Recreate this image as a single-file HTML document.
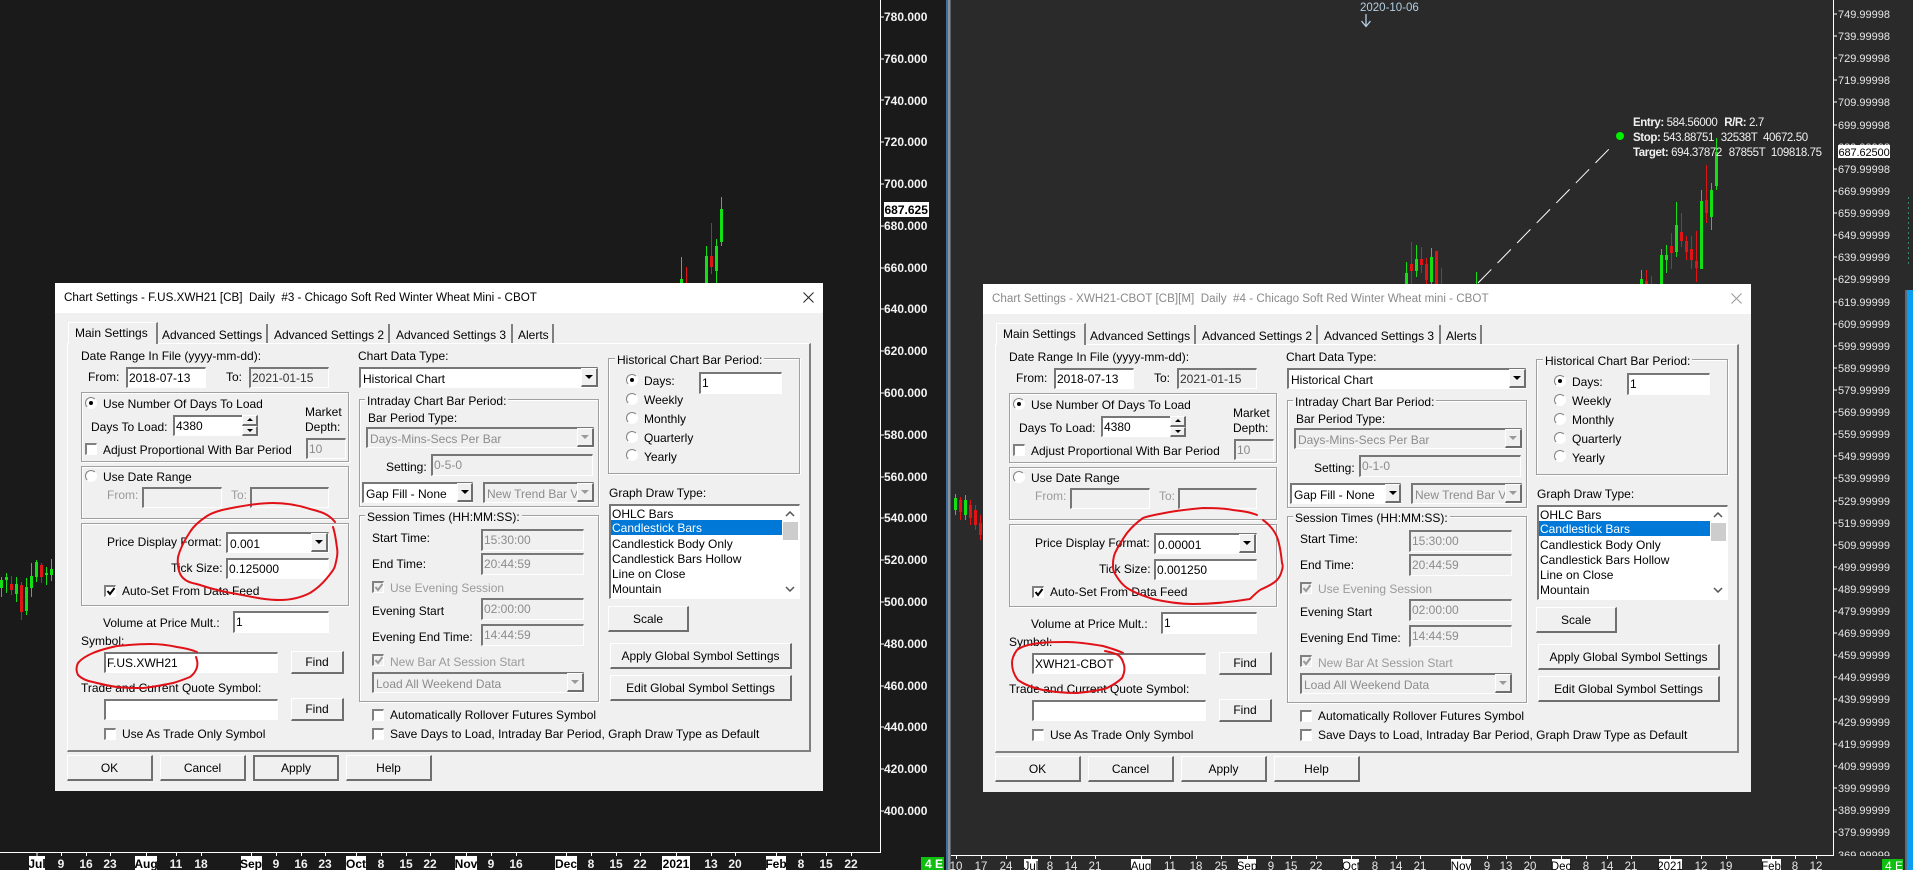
<!DOCTYPE html>
<html><head><meta charset="utf-8"><title>Chart Settings</title>
<style>
html,body{margin:0;padding:0;background:#1a1a1a;width:1913px;height:870px;overflow:hidden}
#chart{position:absolute;left:0;top:0;width:1913px;height:870px}
text{font-family:"Liberation Sans",sans-serif}
.dlg{position:absolute;width:768px;height:508px;background:#f0f0f0;font:12px/14px "Liberation Sans",sans-serif;color:#000;overflow:hidden}
.dlg div{position:absolute;box-sizing:border-box;white-space:nowrap}
.tb{left:0;top:0;width:768px;height:30px;background:#fff}
.panel{left:12px;top:60px;width:744px;height:409px;border-top:1px solid #fff;border-left:1px solid #fff;border-right:2px solid #808080;border-bottom:2px solid #808080}
.tab{top:41px;height:19px;border-right:2px solid #808080}
.tab0{left:13px;top:39px;width:90px;height:22px;background:#f0f0f0;border-top:1px solid #fff;border-left:1px solid #fff;border-right:2px solid #808080}
.g{border:1px solid #a0a0a0;box-shadow:1px 1px 0 #fff,inset 1px 1px 0 #fff}
.l{background:#f0f0f0;padding:0 2px}
.gr{color:#9a9a9a}
.i{background:#fff;border-top:2px solid #777;border-left:2px solid #777;border-right:1px solid #fff;border-bottom:1px solid #fff;padding-left:1px;line-height:18px}
.dlg .s{line-height:20px}
.x{background:#f0f0f0;color:#8c8c8c}
.b{background:#f0f0f0;border-top:1px solid #fff;border-left:1px solid #fff;border-right:2px solid #6e6e6e;border-bottom:2px solid #6e6e6e;text-align:center}
.def{border:2px solid #6e6e6e;outline:0}
.a{background:#f0f0f0;border-top:1px solid #fff;border-left:1px solid #fff;border-right:2px solid #6e6e6e;border-bottom:2px solid #6e6e6e}
.a:after{content:"";position:absolute;left:50%;top:50%;margin:-2px 0 0 -4px;border-left:4px solid transparent;border-right:4px solid transparent;border-top:4px solid #000}
.a.x:after{border-top-color:#999}
.up:after{border-top:0;border-bottom:3px solid #000;margin:-2px 0 0 -3px;border-left-width:3px;border-right-width:3px}
.dn:after{margin:-2px 0 0 -3px;border-top-width:3px;border-left-width:3px;border-right-width:3px}
.r{width:12px;height:12px;border-radius:50%;background:#fff;border:1.5px solid;border-color:#808080 #fff #fff #808080}
.r.on:after{content:"";position:absolute;left:3px;top:3px;width:4px;height:4px;border-radius:50%;background:#000}
.c{width:12px;height:12px;background:#fff;border-top:2px solid #808080;border-left:2px solid #808080;border-right:1px solid #fff;border-bottom:1px solid #fff}
.c svg{position:absolute;left:0;top:-1px;width:10px;height:10px}
.c.x{background:#f0f0f0}
.list{left:554px;top:221px;width:191px;height:95px;background:#fff;border-top:2px solid #777;border-left:2px solid #777;border-right:1px solid #fff;border-bottom:1px solid #fff}
.sel{background:#0078d7;color:#fff}
.thumb{background:#cdcdcd}
.ti{font-size:11.65px}
</style></head><body>
<svg id="chart" width="1913" height="870" viewBox="0 0 1913 870" xmlns="http://www.w3.org/2000/svg">
<rect x="0" y="0" width="946" height="870" fill="#1a1a1a"/>
<rect x="946" y="0" width="2" height="870" fill="#3f6f9f"/>
<rect x="948" y="0" width="2.500" height="870" fill="#8a949c"/>
<rect x="950.500" y="0" width="963" height="870" fill="#2a2a2a"/>
<rect x="1907" y="290" width="6" height="580" fill="#0a9df0"/>
<rect x="1905" y="290" width="2" height="580" fill="#5a6a78"/>
<path d="M1908.500 197V267" stroke="#3a8a6a" stroke-dasharray="2 3" fill="none"/>
<!-- axes -->
<path d="M880.500 0V852.500H0" stroke="#fff" fill="none"/>
<path d="M1833.500 0V855.500H951" stroke="#fff" fill="none"/>
<path stroke="#fff" d="M880 17h4M880 59h4M880 100h4M880 142h4M880 184h4M880 226h4M880 268h4M880 309h4M880 351h4M880 393h4M880 435h4M880 477h4M880 518h4M880 560h4M880 602h4M880 644h4M880 686h4M880 727h4M880 769h4M880 811h4"/>
<path stroke="#fff" d="M1833 14h4M1833 36h4M1833 58h4M1833 80h4M1833 102h4M1833 125h4M1833 169h4M1833 191h4M1833 213h4M1833 235h4M1833 257h4M1833 279h4M1833 302h4M1833 324h4M1833 346h4M1833 368h4M1833 390h4M1833 412h4M1833 434h4M1833 456h4M1833 478h4M1833 501h4M1833 523h4M1833 545h4M1833 567h4M1833 589h4M1833 611h4M1833 633h4M1833 655h4M1833 677h4M1833 699h4M1833 722h4M1833 744h4M1833 766h4M1833 788h4M1833 810h4M1833 832h4"/>
<path stroke="#fff" d="M37 852v4M61.500 852v4M86.500 852v4M110.500 852v4M146.500 852v4M176.500 852v4M201.500 852v4M251.500 852v4M276.500 852v4M301.500 852v4M325.500 852v4M356.500 852v4M381.500 852v4M406.500 852v4M430.500 852v4M466.500 852v4M491.500 852v4M516.500 852v4M566.500 852v4M591.500 852v4M616.500 852v4M640.500 852v4M676.500 852v4M711.500 852v4M735.500 852v4M776.500 852v4M801.500 852v4M826.500 852v4M851.500 852v4"/>
<path stroke="#fff" d="M956.500 855v4M981.500 855v4M1006.500 855v4M1031.500 855v4M1050.500 855v4M1071.500 855v4M1095.500 855v4M1141.500 855v4M1170.500 855v4M1196.500 855v4M1221.500 855v4M1247.500 855v4M1271.500 855v4M1291.500 855v4M1316.500 855v4M1351.500 855v4M1375.500 855v4M1396.500 855v4M1420.500 855v4M1461.500 855v4M1487.500 855v4M1506.500 855v4M1530.500 855v4M1561.500 855v4M1586.500 855v4M1607.500 855v4M1631.500 855v4M1670.500 855v4M1701.500 855v4M1726.500 855v4M1771.500 855v4M1795.500 855v4M1816.500 855v4"/>
<!-- left candles -->
<path fill="none" stroke="#12e012" d="M1.500 577V597M6.500 573V593M16.500 577V602M26.500 578V615M31.500 563V597M36.500 560V582M46.500 567V585M51.500 559V581M681.500 257V283M706.500 246V283M716.500 239V283M721.500 197V246"/>
<path fill="none" stroke="#12e012" stroke-width="3" d="M1.500 580V588M6.500 577V580M16.500 584V594M26.500 587V611M31.500 576V588M36.500 562V577M46.500 573V575M51.500 569V575M681.500 279V283M706.500 256V283M716.500 246V271M721.500 209V242"/>
<path fill="none" stroke="#e01414" d="M11.500 576V595M21.500 582V620M41.500 563V583M686.500 267V283M711.500 223V274"/>
<path fill="none" stroke="#e01414" stroke-width="3" d="M11.500 584V590M21.500 585V612M41.500 565V577M711.500 256V267"/>
<!-- right candles -->
<path fill="none" stroke="#12e012" d="M955.500 494V515M965.500 495V520M1406.500 262V284M1416.500 245V277M1431.500 248V284M1476.500 272V284M1641.500 270V284M1661.500 249V284M1666.500 245V273M1676.500 202V257M1701.500 190V269M1711.500 183V230M1716.500 138V190"/>
<path fill="none" stroke="#12e012" stroke-width="3" d="M955.500 498V510M965.500 500V515M1406.500 273V284M1416.500 259V271M1431.500 257V282M1641.500 279V284M1661.500 255V284M1666.500 255V260M1676.500 225V252M1701.500 201V269M1711.500 190V217M1716.500 152V186"/>
<path fill="none" stroke="#e01414" d="M960.500 497V520M970.500 500V525M975.500 505V530M980.500 515V540M1411.500 242V284M1421.500 247V273M1426.500 258V284M1436.500 251V284M1441.500 268V284M1646.500 270V284M1651.500 276V284M1671.500 233V269M1681.500 213V247M1686.500 236V260M1691.500 236V269M1696.500 231V282M1706.500 165V223"/>
<path fill="none" stroke="#e01414" stroke-width="3" d="M960.500 500V512M970.500 505V518M975.500 510V525M980.500 523V535M1411.500 264V271M1421.500 259V265M1426.500 264V280M1436.500 251V284M1646.500 281V284M1671.500 246V253M1681.500 232V241M1686.500 241V252M1691.500 249V260M1696.500 261V268M1706.500 200V213"/>
<!-- trend line -->
<path d="M1478 283L1612 146" stroke="#fff" stroke-dasharray="19 9" fill="none"/>
<circle cx="1620" cy="136" r="4" fill="#00f000"/>
<g font-size="11.500" fill="#f0f0f0" letter-spacing="-0.4">
<text x="1633" y="126"><tspan font-weight="bold">Entry:</tspan> 584.56000  <tspan font-weight="bold" dx="4">R/R:</tspan> 2.7</text>
<text x="1633" y="141"><tspan font-weight="bold">Stop:</tspan> 543.88751 <tspan dx="4">32538T</tspan> <tspan dx="3">40672.50</tspan></text>
<text x="1633" y="156"><tspan font-weight="bold">Target:</tspan> 694.37872 <tspan dx="4">87855T</tspan> <tspan dx="3">109818.75</tspan></text>
</g>
<text x="1360" y="11" font-size="11.500" fill="#b4cfe2">2020-10-06</text>
<path d="M1366 14V26M1361.500 21L1366 26.500L1370.500 21" stroke="#b4cfe2" stroke-width="1.300" fill="none"/>
<!-- left price axis -->
<g font-size="12" font-weight="bold" fill="#f4f4f4">
<text x="884" y="21">780.000</text><text x="884" y="63">760.000</text><text x="884" y="105">740.000</text><text x="884" y="146">720.000</text><text x="884" y="188">700.000</text><text x="884" y="230">680.000</text><text x="884" y="272">660.000</text><text x="884" y="313">640.000</text><text x="884" y="355">620.000</text><text x="884" y="397">600.000</text><text x="884" y="439">580.000</text><text x="884" y="481">560.000</text><text x="884" y="522">540.000</text><text x="884" y="564">520.000</text><text x="884" y="606">500.000</text><text x="884" y="648">480.000</text><text x="884" y="690">460.000</text><text x="884" y="731">440.000</text><text x="884" y="773">420.000</text><text x="884" y="815">400.000</text>
</g>
<rect x="884" y="202" width="45" height="15" fill="#fff"/>
<text x="884.500" y="214" font-size="12" font-weight="bold" fill="#000">687.625</text>
<!-- right price axis -->
<g font-size="11" fill="#e6e6e6">
<text x="1838" y="18">749.99998</text><text x="1838" y="40">739.99998</text><text x="1838" y="62">729.99998</text><text x="1838" y="84">719.99998</text><text x="1838" y="106">709.99998</text><text x="1838" y="129">699.99998</text><text x="1838" y="151">689.99998</text><text x="1838" y="173">679.99998</text><text x="1838" y="195">669.99999</text><text x="1838" y="217">659.99999</text><text x="1838" y="239">649.99999</text><text x="1838" y="261">639.99999</text><text x="1838" y="283">629.99999</text><text x="1838" y="306">619.99999</text><text x="1838" y="328">609.99999</text><text x="1838" y="350">599.99999</text><text x="1838" y="372">589.99999</text><text x="1838" y="394">579.99999</text><text x="1838" y="416">569.99999</text><text x="1838" y="438">559.99999</text><text x="1838" y="460">549.99999</text><text x="1838" y="482">539.99999</text><text x="1838" y="505">529.99999</text><text x="1838" y="527">519.99999</text><text x="1838" y="549">509.99999</text><text x="1838" y="571">499.99999</text><text x="1838" y="593">489.99999</text><text x="1838" y="615">479.99999</text><text x="1838" y="637">469.99999</text><text x="1838" y="659">459.99999</text><text x="1838" y="681">449.99999</text><text x="1838" y="703">439.99999</text><text x="1838" y="726">429.99999</text><text x="1838" y="748">419.99999</text><text x="1838" y="770">409.99999</text><text x="1838" y="792">399.99999</text><text x="1838" y="814">389.99999</text><text x="1838" y="836">379.99999</text><text x="1838" y="859">369.99999</text>
</g>
<rect x="1834" y="856" width="71" height="14" fill="#2a2a2a"/>
<rect x="1838" y="145" width="52" height="13" fill="#fff"/>
<text x="1838.500" y="156" font-size="11" letter-spacing="-0.1" fill="#000">687.62500</text>
<!-- left time axis -->
<rect x="29" y="856" width="16" height="14" fill="#fff"/><rect x="135" y="856" width="22" height="14" fill="#fff"/><rect x="241" y="856" width="21" height="14" fill="#fff"/><rect x="346" y="856" width="20" height="14" fill="#fff"/><rect x="455" y="856" width="22" height="14" fill="#fff"/><rect x="555" y="856" width="22" height="14" fill="#fff"/><rect x="662" y="856" width="28" height="14" fill="#fff"/><rect x="766" y="856" width="20" height="14" fill="#fff"/>
<g font-size="12" font-weight="bold" fill="#f0f0f0" text-anchor="middle">
<text x="61" y="868">9</text><text x="86" y="868">16</text><text x="110" y="868">23</text><text x="176" y="868">11</text><text x="201" y="868">18</text><text x="276" y="868">9</text><text x="301" y="868">16</text><text x="325" y="868">23</text><text x="381" y="868">8</text><text x="406" y="868">15</text><text x="430" y="868">22</text><text x="491" y="868">9</text><text x="516" y="868">16</text><text x="591" y="868">8</text><text x="616" y="868">15</text><text x="640" y="868">22</text><text x="711" y="868">13</text><text x="735" y="868">20</text><text x="801" y="868">8</text><text x="826" y="868">15</text><text x="851" y="868">22</text>
</g>
<g font-size="12" font-weight="bold" fill="#000" text-anchor="middle">
<text x="37" y="868">Jul</text><text x="146" y="868">Aug</text><text x="251" y="868">Sep</text><text x="356" y="868">Oct</text><text x="466" y="868">Nov</text><text x="566" y="868">Dec</text><text x="676" y="868">2021</text><text x="776" y="868">Feb</text>
</g>
<!-- right time axis -->
<rect x="1024" y="859" width="14" height="11" fill="#fff"/><rect x="1131" y="859" width="20" height="11" fill="#fff"/><rect x="1238" y="859" width="18" height="11" fill="#fff"/><rect x="1343" y="859" width="16" height="11" fill="#fff"/><rect x="1451" y="859" width="20" height="11" fill="#fff"/><rect x="1552" y="859" width="18" height="11" fill="#fff"/><rect x="1659" y="859" width="23" height="11" fill="#fff"/><rect x="1762" y="859" width="19" height="11" fill="#fff"/>
<g font-size="11.500" fill="#e6e6e6" text-anchor="middle">
<text x="956" y="870">10</text><text x="981" y="870">17</text><text x="1006" y="870">24</text><text x="1050" y="870">8</text><text x="1071" y="870">14</text><text x="1095" y="870">21</text><text x="1170" y="870">11</text><text x="1196" y="870">18</text><text x="1221" y="870">25</text><text x="1271" y="870">9</text><text x="1291" y="870">15</text><text x="1316" y="870">22</text><text x="1375" y="870">8</text><text x="1396" y="870">14</text><text x="1420" y="870">21</text><text x="1487" y="870">9</text><text x="1506" y="870">13</text><text x="1530" y="870">20</text><text x="1586" y="870">8</text><text x="1607" y="870">14</text><text x="1631" y="870">21</text><text x="1701" y="870">12</text><text x="1726" y="870">19</text><text x="1795" y="870">8</text><text x="1816" y="870">12</text>
</g>
<g font-size="11.500" fill="#000" text-anchor="middle">
<text x="1031" y="870">Jul</text><text x="1141" y="870">Aug</text><text x="1247" y="870">Sep</text><text x="1351" y="870">Oct</text><text x="1461" y="870">Nov</text><text x="1561" y="870">Dec</text><text x="1670" y="870">2021</text><text x="1771" y="870">Feb</text>
</g>
<rect x="921" y="857" width="23" height="13" fill="#10c010"/>
<text x="925" y="868" font-size="12" font-weight="bold" fill="#fff">4 E</text>
<rect x="1882" y="859" width="21" height="11" fill="#10c010"/>
<text x="1885" y="870" font-size="12" fill="#fff">4 E</text>
</svg>

<div class="dlg" style="left:55px;top:283px">
<div class="tb"></div>
<div class="ti" style="left:9px;top:8px">Chart Settings - F.US.XWH21 [CB]&nbsp; Daily&nbsp; #3 - Chicago Soft Red Winter Wheat Mini - CBOT</div>
<div style="left:748px;top:9px;width:11px;height:11px"><svg width="11" height="11" style="display:block"><path d="M.5.500L10.500 10.500M10.500.500L.5 10.500" stroke="#222" fill="none"/></svg></div>
<div class="panel"></div>
<div class="tab0"></div>
<div style="left:20px;top:43px">Main Settings</div>
<div class="tab" style="left:103px;width:110px"></div><div style="left:107px;top:45px">Advanced Settings</div>
<div class="tab" style="left:213px;width:122px"></div><div style="left:219px;top:45px">Advanced Settings 2</div>
<div class="tab" style="left:335px;width:123px"></div><div style="left:341px;top:45px">Advanced Settings 3</div>
<div class="tab" style="left:458px;width:41px"></div><div style="left:463px;top:45px">Alerts</div>

<div style="left:26px;top:66px">Date Range In File (yyyy-mm-dd):</div>
<div style="left:33px;top:87px">From:</div>
<div class="i" style="left:71px;top:84px;width:80px;height:21px">2018-07-13</div>
<div style="left:171px;top:87px">To:</div>
<div class="i x" style="left:194px;top:84px;width:80px;height:21px;color:#333">2021-01-15</div>

<div class="g" style="left:26px;top:109px;width:268px;height:70px"></div>
<div class="r on" style="left:30px;top:114px"></div>
<div style="left:48px;top:114px">Use Number Of Days To Load</div>
<div style="left:36px;top:137px">Days To Load:</div>
<div class="i" style="left:118px;top:132px;width:70px;height:21px">4380</div>
<div class="a up" style="left:187px;top:132px;width:16px;height:11px"></div>
<div class="a dn" style="left:187px;top:143px;width:16px;height:10px"></div>
<div style="left:250px;top:122px">Market</div>
<div style="left:250px;top:137px">Depth:</div>
<div class="i x" style="left:251px;top:155px;width:40px;height:21px">10</div>
<div class="c" style="left:30px;top:160px"></div>
<div style="left:48px;top:160px">Adjust Proportional With Bar Period</div>

<div class="g" style="left:26px;top:183px;width:268px;height:53px"></div>
<div class="r" style="left:30px;top:187px"></div>
<div style="left:48px;top:187px">Use Date Range</div>
<div class="gr" style="left:52px;top:205px">From:</div>
<div class="i x" style="left:87px;top:204px;width:80px;height:21px"></div>
<div class="gr" style="left:176px;top:205px">To:</div>
<div class="i x" style="left:195px;top:204px;width:79px;height:21px"></div>

<div class="g" style="left:26px;top:240px;width:268px;height:83px"></div>
<div style="left:52px;top:252px">Price Display Format:</div>
<div class="i s" style="left:171px;top:249px;width:103px;height:21px;padding-left:2px">0.001</div>
<div class="a" style="left:256px;top:250px;width:17px;height:19px"></div>
<div style="left:116px;top:278px">Tick Size:</div>
<div class="i" style="left:171px;top:275px;width:103px;height:21px">0.125000</div>
<div class="c" style="left:49px;top:302px"><svg viewBox="0 0 10 10"><path d="M1.500 5L4 8L8.500 2" stroke="#000" stroke-width="2" fill="none"/></svg></div>
<div style="left:67px;top:301px">Auto-Set From Data Feed</div>

<div style="left:48px;top:333px">Volume at Price Mult.:</div>
<div class="i" style="left:178px;top:328px;width:96px;height:22px">1</div>
<div style="left:26px;top:351px">Symbol:</div>
<div class="i" style="left:49px;top:369px;width:174px;height:21px">F.US.XWH21</div>
<div class="b" style="left:236px;top:368px;width:53px;height:23px;line-height:21px">Find</div>
<div style="left:26px;top:398px">Trade and Current Quote Symbol:</div>
<div class="i" style="left:49px;top:416px;width:174px;height:21px"></div>
<div class="b" style="left:236px;top:415px;width:53px;height:23px;line-height:21px">Find</div>
<div class="c" style="left:49px;top:445px"></div>
<div style="left:67px;top:444px">Use As Trade Only Symbol</div>

<div style="left:303px;top:66px">Chart Data Type:</div>
<div class="i s" style="left:304px;top:84px;width:239px;height:21px;padding-left:2px">Historical Chart</div>
<div class="a" style="left:526px;top:85px;width:17px;height:19px"></div>
<div class="g" style="left:304px;top:116px;width:240px;height:108px"></div>
<div class="l" style="left:310px;top:111px">Intraday Chart Bar Period:</div>
<div style="left:313px;top:128px">Bar Period Type:</div>
<div class="i x s" style="left:311px;top:144px;width:228px;height:21px;padding-left:2px">Days-Mins-Secs Per Bar</div>
<div class="a x" style="left:522px;top:145px;width:17px;height:19px"></div>
<div style="left:331px;top:177px">Setting:</div>
<div class="i x" style="left:376px;top:171px;width:162px;height:22px">0-5-0</div>
<div class="i s" style="left:307px;top:199px;width:111px;height:21px;padding-left:2px">Gap Fill - None</div>
<div class="a" style="left:402px;top:200px;width:16px;height:19px"></div>
<div class="i x s" style="left:428px;top:199px;width:111px;height:21px;padding-left:2px;overflow:hidden">New Trend Bar V</div>
<div class="a x" style="left:522px;top:200px;width:17px;height:19px"></div>

<div class="g" style="left:304px;top:232px;width:240px;height:187px"></div>
<div class="l" style="left:310px;top:227px">Session Times (HH:MM:SS):</div>
<div style="left:317px;top:248px">Start Time:</div>
<div class="i x" style="left:426px;top:246px;width:103px;height:22px">15:30:00</div>
<div style="left:317px;top:274px">End Time:</div>
<div class="i x" style="left:426px;top:270px;width:103px;height:22px">20:44:59</div>
<div class="c x" style="left:317px;top:298px"><svg viewBox="0 0 10 10"><path d="M1.500 5L4 8L8.500 2" stroke="#999" stroke-width="2" fill="none"/></svg></div>
<div class="gr" style="left:335px;top:298px">Use Evening Session</div>
<div style="left:317px;top:321px">Evening Start</div>
<div class="i x" style="left:426px;top:315px;width:103px;height:22px">02:00:00</div>
<div style="left:317px;top:347px">Evening End Time:</div>
<div class="i x" style="left:426px;top:341px;width:103px;height:22px">14:44:59</div>
<div class="c x" style="left:317px;top:371px"><svg viewBox="0 0 10 10"><path d="M1.500 5L4 8L8.500 2" stroke="#999" stroke-width="2" fill="none"/></svg></div>
<div class="gr" style="left:335px;top:372px">New Bar At Session Start</div>
<div class="i x s" style="left:317px;top:389px;width:212px;height:21px;padding-left:2px">Load All Weekend Data</div>
<div class="a x" style="left:512px;top:390px;width:17px;height:19px"></div>
<div class="c" style="left:317px;top:426px"></div>
<div style="left:335px;top:425px">Automatically Rollover Futures Symbol</div>
<div class="c" style="left:317px;top:445px"></div>
<div style="left:335px;top:444px">Save Days to Load, Intraday Bar Period, Graph Draw Type as Default</div>

<div class="g" style="left:553px;top:75px;width:192px;height:116px"></div>
<div class="l" style="left:560px;top:70px">Historical Chart Bar Period:</div>
<div class="r on" style="left:571px;top:91px"></div><div style="left:589px;top:91px">Days:</div>
<div class="i" style="left:644px;top:89px;width:83px;height:22px">1</div>
<div class="r" style="left:571px;top:110px"></div><div style="left:589px;top:110px">Weekly</div>
<div class="r" style="left:571px;top:129px"></div><div style="left:589px;top:129px">Monthly</div>
<div class="r" style="left:571px;top:148px"></div><div style="left:589px;top:148px">Quarterly</div>
<div class="r" style="left:571px;top:166px"></div><div style="left:589px;top:167px">Yearly</div>

<div style="left:554px;top:203px">Graph Draw Type:</div>
<div class="list"></div>
<div class="sel" style="left:556px;top:237px;width:171px;height:15px"></div>
<div style="left:557px;top:224px">OHLC Bars</div>
<div style="left:557px;top:238px;color:#fff">Candlestick Bars</div>
<div style="left:557px;top:254px">Candlestick Body Only</div>
<div style="left:557px;top:269px">Candlestick Bars Hollow</div>
<div style="left:557px;top:284px">Line on Close</div>
<div style="left:557px;top:299px">Mountain</div>
<div class="thumb" style="left:728px;top:239px;width:15px;height:18px"></div>
<div style="left:730px;top:228px"><svg width="10" height="6" style="display:block"><path d="M1 5L5 1L9 5" stroke="#555" stroke-width="1.500" fill="none"/></svg></div>
<div style="left:730px;top:303px"><svg width="10" height="6" style="display:block"><path d="M1 1L5 5L9 1" stroke="#555" stroke-width="1.500" fill="none"/></svg></div>
<div class="b" style="left:553px;top:323px;width:81px;height:26px;line-height:24px">Scale</div>
<div class="b" style="left:555px;top:360px;width:182px;height:26px;line-height:24px">Apply Global Symbol Settings</div>
<div class="b" style="left:555px;top:392px;width:182px;height:26px;line-height:24px">Edit Global Symbol Settings</div>

<div class="b" style="left:12px;top:472px;width:86px;height:26px;line-height:24px">OK</div>
<div class="b" style="left:105px;top:472px;width:86px;height:26px;line-height:24px">Cancel</div>
<div class="b def" style="left:198px;top:472px;width:86px;height:26px;line-height:22px">Apply</div>
<div class="b" style="left:291px;top:472px;width:86px;height:26px;line-height:24px">Help</div>
</div>

<div class="dlg" style="left:983px;top:284px">
<div class="tb"></div>
<div class="ti" style="left:9px;top:8px;color:#8a8a8a">Chart Settings - XWH21-CBOT [CB][M]&nbsp; Daily&nbsp; #4 - Chicago Soft Red Winter Wheat mini - CBOT</div>
<div style="left:748px;top:9px;width:11px;height:11px"><svg width="11" height="11" style="display:block"><path d="M.5.500L10.500 10.500M10.500.500L.5 10.500" stroke="#999" fill="none"/></svg></div>
<div class="panel"></div>
<div class="tab0"></div>
<div style="left:20px;top:43px">Main Settings</div>
<div class="tab" style="left:103px;width:110px"></div><div style="left:107px;top:45px">Advanced Settings</div>
<div class="tab" style="left:213px;width:122px"></div><div style="left:219px;top:45px">Advanced Settings 2</div>
<div class="tab" style="left:335px;width:123px"></div><div style="left:341px;top:45px">Advanced Settings 3</div>
<div class="tab" style="left:458px;width:41px"></div><div style="left:463px;top:45px">Alerts</div>

<div style="left:26px;top:66px">Date Range In File (yyyy-mm-dd):</div>
<div style="left:33px;top:87px">From:</div>
<div class="i" style="left:71px;top:84px;width:80px;height:21px">2018-07-13</div>
<div style="left:171px;top:87px">To:</div>
<div class="i x" style="left:194px;top:84px;width:80px;height:21px;color:#333">2021-01-15</div>

<div class="g" style="left:26px;top:109px;width:268px;height:70px"></div>
<div class="r on" style="left:30px;top:114px"></div>
<div style="left:48px;top:114px">Use Number Of Days To Load</div>
<div style="left:36px;top:137px">Days To Load:</div>
<div class="i" style="left:118px;top:132px;width:70px;height:21px">4380</div>
<div class="a up" style="left:187px;top:132px;width:16px;height:11px"></div>
<div class="a dn" style="left:187px;top:143px;width:16px;height:10px"></div>
<div style="left:250px;top:122px">Market</div>
<div style="left:250px;top:137px">Depth:</div>
<div class="i x" style="left:251px;top:155px;width:40px;height:21px">10</div>
<div class="c" style="left:30px;top:160px"></div>
<div style="left:48px;top:160px">Adjust Proportional With Bar Period</div>

<div class="g" style="left:26px;top:183px;width:268px;height:53px"></div>
<div class="r" style="left:30px;top:187px"></div>
<div style="left:48px;top:187px">Use Date Range</div>
<div class="gr" style="left:52px;top:205px">From:</div>
<div class="i x" style="left:87px;top:204px;width:80px;height:21px"></div>
<div class="gr" style="left:176px;top:205px">To:</div>
<div class="i x" style="left:195px;top:204px;width:79px;height:21px"></div>

<div class="g" style="left:26px;top:240px;width:268px;height:83px"></div>
<div style="left:52px;top:252px">Price Display Format:</div>
<div class="i s" style="left:171px;top:249px;width:103px;height:21px;padding-left:2px">0.00001</div>
<div class="a" style="left:256px;top:250px;width:17px;height:19px"></div>
<div style="left:116px;top:278px">Tick Size:</div>
<div class="i" style="left:171px;top:275px;width:103px;height:21px">0.001250</div>
<div class="c" style="left:49px;top:302px"><svg viewBox="0 0 10 10"><path d="M1.500 5L4 8L8.500 2" stroke="#000" stroke-width="2" fill="none"/></svg></div>
<div style="left:67px;top:301px">Auto-Set From Data Feed</div>

<div style="left:48px;top:333px">Volume at Price Mult.:</div>
<div class="i" style="left:178px;top:328px;width:96px;height:22px">1</div>
<div style="left:26px;top:351px">Symbol:</div>
<div class="i" style="left:49px;top:369px;width:174px;height:21px">XWH21-CBOT</div>
<div class="b" style="left:236px;top:368px;width:53px;height:23px;line-height:21px">Find</div>
<div style="left:26px;top:398px">Trade and Current Quote Symbol:</div>
<div class="i" style="left:49px;top:416px;width:174px;height:21px"></div>
<div class="b" style="left:236px;top:415px;width:53px;height:23px;line-height:21px">Find</div>
<div class="c" style="left:49px;top:445px"></div>
<div style="left:67px;top:444px">Use As Trade Only Symbol</div>

<div style="left:303px;top:66px">Chart Data Type:</div>
<div class="i s" style="left:304px;top:84px;width:239px;height:21px;padding-left:2px">Historical Chart</div>
<div class="a" style="left:526px;top:85px;width:17px;height:19px"></div>
<div class="g" style="left:304px;top:116px;width:240px;height:108px"></div>
<div class="l" style="left:310px;top:111px">Intraday Chart Bar Period:</div>
<div style="left:313px;top:128px">Bar Period Type:</div>
<div class="i x s" style="left:311px;top:144px;width:228px;height:21px;padding-left:2px">Days-Mins-Secs Per Bar</div>
<div class="a x" style="left:522px;top:145px;width:17px;height:19px"></div>
<div style="left:331px;top:177px">Setting:</div>
<div class="i x" style="left:376px;top:171px;width:162px;height:22px">0-1-0</div>
<div class="i s" style="left:307px;top:199px;width:111px;height:21px;padding-left:2px">Gap Fill - None</div>
<div class="a" style="left:402px;top:200px;width:16px;height:19px"></div>
<div class="i x s" style="left:428px;top:199px;width:111px;height:21px;padding-left:2px;overflow:hidden">New Trend Bar V</div>
<div class="a x" style="left:522px;top:200px;width:17px;height:19px"></div>

<div class="g" style="left:304px;top:232px;width:240px;height:187px"></div>
<div class="l" style="left:310px;top:227px">Session Times (HH:MM:SS):</div>
<div style="left:317px;top:248px">Start Time:</div>
<div class="i x" style="left:426px;top:246px;width:103px;height:22px">15:30:00</div>
<div style="left:317px;top:274px">End Time:</div>
<div class="i x" style="left:426px;top:270px;width:103px;height:22px">20:44:59</div>
<div class="c x" style="left:317px;top:298px"><svg viewBox="0 0 10 10"><path d="M1.500 5L4 8L8.500 2" stroke="#999" stroke-width="2" fill="none"/></svg></div>
<div class="gr" style="left:335px;top:298px">Use Evening Session</div>
<div style="left:317px;top:321px">Evening Start</div>
<div class="i x" style="left:426px;top:315px;width:103px;height:22px">02:00:00</div>
<div style="left:317px;top:347px">Evening End Time:</div>
<div class="i x" style="left:426px;top:341px;width:103px;height:22px">14:44:59</div>
<div class="c x" style="left:317px;top:371px"><svg viewBox="0 0 10 10"><path d="M1.500 5L4 8L8.500 2" stroke="#999" stroke-width="2" fill="none"/></svg></div>
<div class="gr" style="left:335px;top:372px">New Bar At Session Start</div>
<div class="i x s" style="left:317px;top:389px;width:212px;height:21px;padding-left:2px">Load All Weekend Data</div>
<div class="a x" style="left:512px;top:390px;width:17px;height:19px"></div>
<div class="c" style="left:317px;top:426px"></div>
<div style="left:335px;top:425px">Automatically Rollover Futures Symbol</div>
<div class="c" style="left:317px;top:445px"></div>
<div style="left:335px;top:444px">Save Days to Load, Intraday Bar Period, Graph Draw Type as Default</div>

<div class="g" style="left:553px;top:75px;width:192px;height:116px"></div>
<div class="l" style="left:560px;top:70px">Historical Chart Bar Period:</div>
<div class="r on" style="left:571px;top:91px"></div><div style="left:589px;top:91px">Days:</div>
<div class="i" style="left:644px;top:89px;width:83px;height:22px">1</div>
<div class="r" style="left:571px;top:110px"></div><div style="left:589px;top:110px">Weekly</div>
<div class="r" style="left:571px;top:129px"></div><div style="left:589px;top:129px">Monthly</div>
<div class="r" style="left:571px;top:148px"></div><div style="left:589px;top:148px">Quarterly</div>
<div class="r" style="left:571px;top:166px"></div><div style="left:589px;top:167px">Yearly</div>

<div style="left:554px;top:203px">Graph Draw Type:</div>
<div class="list"></div>
<div class="sel" style="left:556px;top:237px;width:171px;height:15px"></div>
<div style="left:557px;top:224px">OHLC Bars</div>
<div style="left:557px;top:238px;color:#fff">Candlestick Bars</div>
<div style="left:557px;top:254px">Candlestick Body Only</div>
<div style="left:557px;top:269px">Candlestick Bars Hollow</div>
<div style="left:557px;top:284px">Line on Close</div>
<div style="left:557px;top:299px">Mountain</div>
<div class="thumb" style="left:728px;top:239px;width:15px;height:18px"></div>
<div style="left:730px;top:228px"><svg width="10" height="6" style="display:block"><path d="M1 5L5 1L9 5" stroke="#555" stroke-width="1.500" fill="none"/></svg></div>
<div style="left:730px;top:303px"><svg width="10" height="6" style="display:block"><path d="M1 1L5 5L9 1" stroke="#555" stroke-width="1.500" fill="none"/></svg></div>
<div class="b" style="left:553px;top:323px;width:81px;height:26px;line-height:24px">Scale</div>
<div class="b" style="left:555px;top:360px;width:182px;height:26px;line-height:24px">Apply Global Symbol Settings</div>
<div class="b" style="left:555px;top:392px;width:182px;height:26px;line-height:24px">Edit Global Symbol Settings</div>

<div class="b" style="left:12px;top:472px;width:86px;height:26px;line-height:24px">OK</div>
<div class="b" style="left:105px;top:472px;width:86px;height:26px;line-height:24px">Cancel</div>
<div class="b" style="left:198px;top:472px;width:86px;height:26px;line-height:24px">Apply</div>
<div class="b" style="left:291px;top:472px;width:86px;height:26px;line-height:24px">Help</div>
</div>

<svg width="1913" height="870" viewBox="0 0 1913 870" style="position:absolute;left:0;top:0" xmlns="http://www.w3.org/2000/svg">
<g fill="none" stroke="#e01218" stroke-width="2" stroke-linejoin="round" stroke-linecap="round">
<path d="M335 522C328 513 318 511 310 509C298 505 285 503 273 503C260 503 248 505 237 507C226 509 215 511 207 516C198 522 193 527 190 532C184 541 180 549 178 557C177 566 179 574 183 578C188 583 194 583 200 585C212 589 224 592 237 594C252 597 266 600 280 600C291 600 302 597 310 593C318 588 323 583 327 578C331 573 334 570 335 566C337 558 338 553 337 548C336 540 335 533 333 527"/>
<path d="M197 652C190 649 184 648 177 647C168 645 159 644 150 644C139 644 128 645 117 646C108 648 100 650 93 653C86 656 81 659 78 663C76 667 76 671 78 675C82 679 87 681 93 682C101 684 109 686 117 687C126 688 134 688 143 688C153 687 163 685 173 683C180 681 185 679 190 677C194 674 196 671 197 667C198 663 197 660 196 657"/>
<path d="M1257 515C1250 512 1242 511 1233 510C1223 508 1213 508 1203 508C1192 509 1181 510 1170 512C1160 514 1151 515 1143 518C1136 523 1131 528 1127 533C1122 540 1118 547 1115 553C1113 558 1113 562 1113 567C1113 571 1115 574 1117 577C1120 582 1123 585 1127 588C1135 593 1144 596 1153 599C1166 602 1179 604 1193 604C1213 604 1232 602 1250 599C1254 595 1256 593 1260 590C1266 587 1272 585 1277 580C1280 577 1281 574 1282 570C1283 567 1283 565 1282 563C1281 553 1280 545 1277 537C1274 530 1270 525 1263 520"/>
<path d="M1123 653C1117 650 1110 648 1103 646C1091 644 1079 642 1067 642C1055 642 1044 642 1033 644C1027 645 1021 647 1017 650C1014 654 1012 658 1012 663C1012 669 1014 675 1018 680C1025 685 1034 688 1043 690C1054 692 1066 693 1077 693C1087 692 1098 691 1107 688C1113 685 1118 682 1122 678C1124 674 1125 669 1124 665C1123 661 1121 657 1118 655C1114 653 1110 652 1105 651"/>
</g>
</svg>
</body></html>
